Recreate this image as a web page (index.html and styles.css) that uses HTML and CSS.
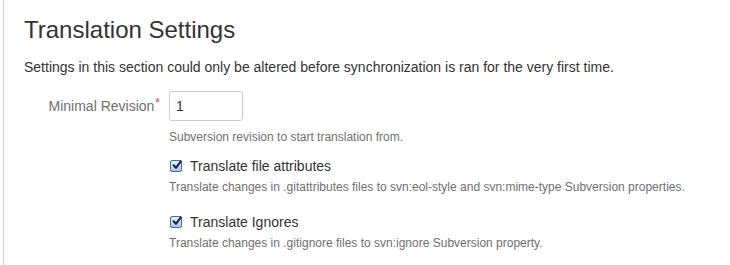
FILE: index.html
```html
<!DOCTYPE html>
<html>
<head>
<meta charset="utf-8">
<link rel="stylesheet" href="styles.css">
</head>
<body>
<div class="page">
  <h2 class="title">Translation Settings</h2>
  <p class="intro">Settings in this section could only be altered before synchronization is ran for the very first time.</p>
  <form class="form">
    <div class="field-group">
      <label class="field-label" for="rev">Minimal Revision<span class="req">*</span></label>
      <div class="field">
        <input class="text" id="rev" type="text" value="1">
        <div class="description first">Subversion revision to start translation from.</div>
      </div>
    </div>
    <div class="field-group check-group g1">
      <div></div>
      <div class="field">
        <div class="check-row">
          <span class="cbox"><svg viewBox="0 0 12 12" width="12" height="12"><path d="M2.6 6.2 L5 8.8 L9.8 2.4" fill="none" stroke="#16243f" stroke-width="2" stroke-linecap="round" stroke-linejoin="round"/></svg></span>
          <span class="check-label">Translate file attributes</span>
        </div>
        <div class="description">Translate changes in .gitattributes files to svn:eol-style and svn:mime-type Subversion properties.</div>
      </div>
    </div>
    <div class="field-group check-group g2">
      <div></div>
      <div class="field">
        <div class="check-row">
          <span class="cbox"><svg viewBox="0 0 12 12" width="12" height="12"><path d="M2.6 6.2 L5 8.8 L9.8 2.4" fill="none" stroke="#16243f" stroke-width="2" stroke-linecap="round" stroke-linejoin="round"/></svg></span>
          <span class="check-label">Translate Ignores</span>
        </div>
        <div class="description">Translate changes in .gitignore files to svn:ignore Subversion property.</div>
      </div>
    </div>
  </form>
</div>
</body>
</html>
```
FILE: styles.css
```css
html, body {
  margin: 0;
  padding: 0;
  background: #fff;
}
body {
  font-family: "Liberation Sans", Arial, sans-serif;
  color: #333;
  width: 730px;
  height: 265px;
  overflow: hidden;
}
.page {
  margin-left: 3px;
  border-left: 1px solid #cccccc;
  height: 265px;
  padding: 16px 0 0 20px;
  box-sizing: border-box;
}
.title {
  margin: 0;
  font-size: 24px;
  line-height: 28px;
  font-weight: normal;
  color: #333;
}
.intro {
  margin: 13px 0 0;
  font-size: 14px;
  line-height: 20px;
  color: #333;
}
.form {
  margin-top: 14px;
}
.field-group {
  display: grid;
  grid-template-columns: 137px 1fr;
  column-gap: 8px;
}
.field-label {
  font-size: 14px;
  line-height: 20px;
  color: #707070;
  text-align: right;
  padding-top: 5px;
  padding-right: 1px;
}
.req {
  color: #d04437;
  font-size: 12px;
  vertical-align: top;
  position: relative;
  top: -3px;
  margin-left: 1px;
}
.text {
  display: block;
  box-sizing: border-box;
  width: 74px;
  height: 30px;
  border: 1px solid #cccccc;
  border-radius: 3px;
  padding: 0 6px;
  font-family: "Liberation Sans", Arial, sans-serif;
  font-size: 14px;
  color: #333;
  margin: 0;
  outline: none;
}
.description {
  font-size: 12px;
  line-height: 20px;
  color: #707070;
  margin-top: 1px;
}
.description.first {
  margin-top: 6px;
}
.g1 {
  margin-top: 9px;
}
.g2 {
  margin-top: 15px;
}
.check-row {
  display: flex;
  align-items: center;
  height: 20px;
  margin-left: 1px;
}
.cbox {
  box-sizing: border-box;
  width: 12px;
  height: 12px;
  border: 1px solid #51698f;
  border-radius: 2px;
  background: linear-gradient(#e3eefc, #a9c8ee);
  display: flex;
  align-items: center;
  justify-content: center;
  margin-right: 8px;
  margin-top: 0px;
  position: relative;
}
.cbox svg {
  position: absolute;
  left: 0;
  top: -2px;
  width: 12px;
  height: 12px;
}
.check-label {
  font-size: 14px;
  line-height: 20px;
  color: #333;
}
```
